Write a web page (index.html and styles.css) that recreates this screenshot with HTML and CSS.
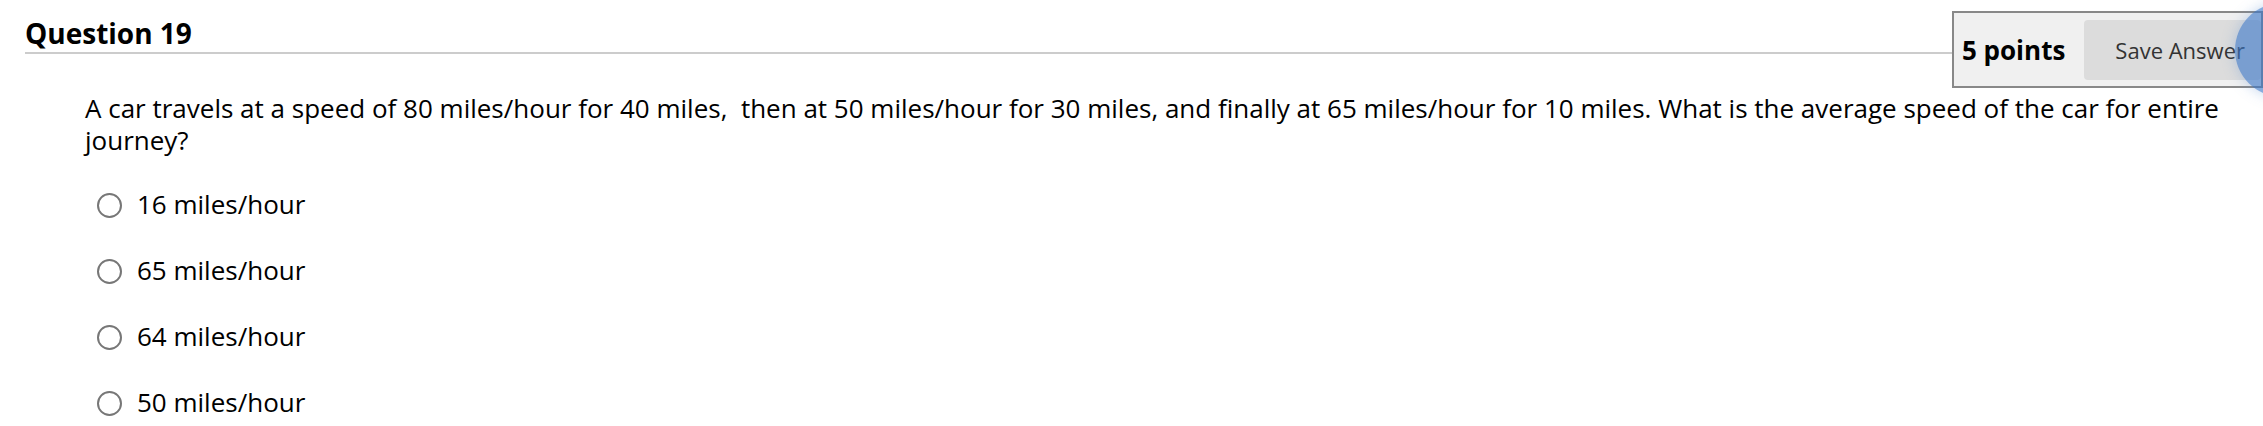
FILE: index.html
```html
<!DOCTYPE html>
<html lang="en">
<head>
    <meta charset="UTF-8">
    <meta name="viewport" content="width=device-width, initial-scale=1.0">
    <title>Question 19</title>
    <link rel="stylesheet" href="styles.css">
</head>
<body>
    <div class="question">
        <div class="question-header">
            <h3 class="question-title">Question 19</h3>
            <div class="points-box">
                <span class="points">5 points</span>
                <button class="save-btn" type="button">Save Answer</button>
            </div>
        </div>
        <div class="question-body">
            <p class="question-text">A car travels at a speed of 80 miles/hour for 40 miles,&nbsp; then at 50 miles/hour for 30 miles, and finally at 65 miles/hour for 10 miles. What is the average speed of the car for entire journey?</p>
            <ul class="answers">
                <li><label><input type="radio" name="q19" value="a"> 16 miles/hour</label></li>
                <li><label><input type="radio" name="q19" value="b"> 65 miles/hour</label></li>
                <li><label><input type="radio" name="q19" value="c"> 64 miles/hour</label></li>
                <li><label><input type="radio" name="q19" value="d"> 50 miles/hour</label></li>
            </ul>
        </div>
    </div>
    <div class="focus-dot"></div>
</body>
</html>
```

FILE: styles.css
```css
body {
    margin: 0;
    padding: 0;
    font-family: "Open Sans", Arial, sans-serif;
    color: #000;
    background-color: #fff;
    overflow: hidden;
}
.question-header {
    display: flex;
    align-items: flex-start;
    height: 54px;
    margin-left: 25px;
}
.question-title {
    flex: 1;
    min-width: 0;
    margin: 16px 0 0 0;
    font-size: 28px;
    line-height: 34px;
    font-weight: 700;
    padding-bottom: 2px;
    border-bottom: 2px solid #cccccc;
}
.points-box {
    flex-shrink: 0;
    display: flex;
    align-items: center;
    margin-top: 11px;
    height: 73px;
    padding-left: 8px;
    border: 2px solid #888;
    background-color: #f0f0f0;
}
.points {
    font-size: 26px;
    font-weight: 700;
    margin-right: 19px;
}
.save-btn {
    height: 60px;
    padding: 0 16px 0 31px;
    border: none;
    border-radius: 4px;
    background-color: #dcdcdc;
    color: #333;
    font-family: "Open Sans", Arial, sans-serif;
    font-size: 22px;
}
.question-body {
    padding-left: 85px;
}
.question-text {
    margin: 38px 0 0 0;
    padding-right: 30px;
    font-size: 26px;
    line-height: 32px;
}
.answers {
    list-style: none;
    margin: 32px 0 0 12px;
    padding: 0;
}
.answers li {
    margin-bottom: 34px;
}
.answers label {
    display: flex;
    align-items: center;
    height: 32px;
    font-size: 26px;
}
.answers input[type="radio"] {
    appearance: none;
    -webkit-appearance: none;
    width: 25px;
    height: 25px;
    margin: 2px 15px 0 0;
    border: 2px solid #777;
    border-radius: 50%;
    background-color: #fff;
}
.focus-dot {
    position: absolute;
    top: 3px;
    left: 2235px;
    width: 94px;
    height: 94px;
    border-radius: 50%;
    background-color: rgba(60, 120, 200, 0.62);
    box-shadow: 0 0 14px rgba(90, 140, 210, 0.35);
}
```
